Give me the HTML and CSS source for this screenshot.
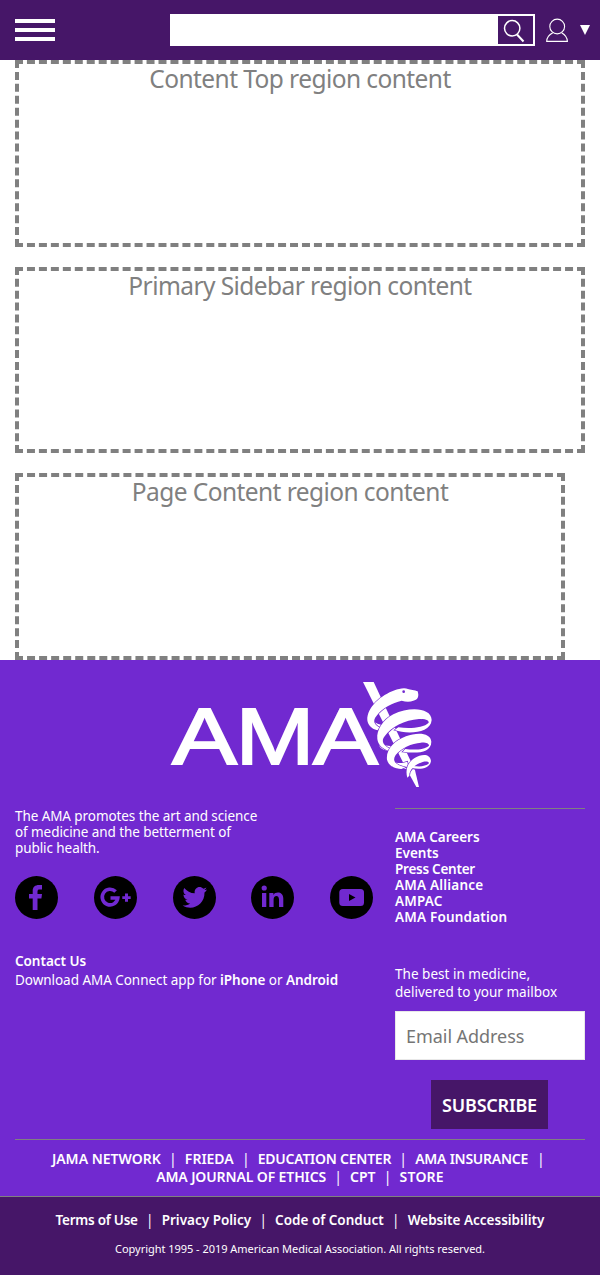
FILE: index.html
```html
<!DOCTYPE html>
<html lang="en">
<head>
<meta charset="utf-8">
<title>American Medical Association</title>
<link rel="stylesheet" href="styles.css">
</head>
<body>
<header class="header">
  <button class="menu" aria-label="Menu"><span></span><span></span><span></span></button>
  <form class="search">
    <input class="search-input" type="text" aria-label="Search">
    <button class="search-button" type="button" aria-label="Search">
      <svg width="35" height="28" viewBox="0 0 35 28" fill="none" stroke="#fff"><circle cx="14.2" cy="12.3" r="7.7" stroke-width="1.5"/><path d="M19 18.5 25.5 25.5" stroke-width="2"/></svg>
    </button>
  </form>
  <svg class="user" width="22" height="24" viewBox="0 0 22 24" fill="none" stroke="#fff" stroke-width="1.1"><circle cx="11.2" cy="8.5" r="7.4"/><path d="M6.8 14.8C3 16.8.8 19.5.7 23.4H21.4C21.2 19.5 19 16.8 15.6 14.8"/></svg>
  <svg class="caret" width="10" height="10" viewBox="0 0 10 10"><path d="M0 0H10L5 10Z" fill="#fff"/></svg>
</header>
<main class="content">
  <section class="region">Content Top region content</section>
  <section class="region">Primary Sidebar region content</section>
  <section class="region region-page">Page Content region content</section>
</main>
<footer class="footer">
  <div class="logo">
    <svg width="280" height="130" viewBox="0 0 280 130" role="img" aria-label="AMA">
      <g class="logo-text">
        <text x="12" y="94.2" textLength="65" lengthAdjust="spacingAndGlyphs">A</text>
        <text x="75.5" y="94.2" textLength="79" lengthAdjust="spacingAndGlyphs">M</text>
        <text x="153" y="94.2" textLength="65" lengthAdjust="spacingAndGlyphs">A</text>
      </g>
      <g transform="translate(155 0) scale(.33333)" class="snake">
        <path d="M144 36H176L300 301 312 351H304L271 291Z"/>
        <g transform="translate(-45 0)">
        <path d="M222 157C228 159 236 163 249 167L237 182C220 178 210 173 207 165ZM252 224C260 227 268 228 278 228L270 244C250 241 240 236 238 226ZM283 276C292 281 308 280 322 275L326 296C297 299 275 294 267 282Z"/>
        <path d="M353 64C345 60 330 60 324 57 312 52 295 57 284 61 244 75 200 112 202 151 204 165 213 176 232 181L240 173C222 164 217 152 230 137 246 115 277 98 305 92 326 99 343 93 351 87 357 79 355 72 353 64Z"/>
        <path d="M395 150C394 113 329 109 280 133 248 150 229 181 232 207 234 224 247 237 268 243L272 237C250 228 242 213 254 199 273 171 314 150 357 147 374 147 387 149 386 158 371 173 332 177 295 172L284 180C320 194 392 191 395 150Z"/>
        <path d="M394 215C392 188 352 186 318 199 283 212 257 239 261 269 265 286 281 295 304 297L317 292C284 285 276 271 287 255 304 234 335 220 363 218 378 217 387 221 387 227 373 239 344 241 316 237L308 245C342 250 394 252 394 215Z"/>
        <path d="M393 273C390 250 365 252 344 264 323 277 315 300 322 323L328 317C327 301 344 283 368 276 379 273 387 275 387 280 378 289 359 291 343 288L335 294C360 300 390 296 393 273Z"/>
        <circle class="eye" cx="311" cy="65" r="4"/>
        </g>
      </g>
    </svg>
  </div>
  <div class="columns">
    <div class="left">
      <p class="mission">The AMA promotes the art and science<br>of medicine and the betterment of<br>public health.</p>
      <div class="social">
        <svg viewBox="0 0 43 43"><circle cx="21.5" cy="21.5" r="21.5"/><path class="mark" d="M17.7 34V22.5H14V18H17.7V15C17.7 11 20 9 24 9H27V13.4H24.7C23 13.4 22.5 14 22.5 15.5V18H27L26.4 22.5H22.5V34Z"/></svg>
        <svg viewBox="0 0 43 43"><circle cx="21.5" cy="21.5" r="21.5"/><path d="M21.6 15.6A7.8 7.8 0 1 0 23.8 22H16.5" fill="none" stroke="#7129d0" stroke-width="3.6"/><path class="mark" d="M31 17.5H34V20.2H36.7V23H34V25.8H31V23H28.3V20.2H31Z"/></svg>
        <svg viewBox="0 0 43 43"><circle cx="21.5" cy="21.5" r="21.5"/><path class="mark" d="M34 13.4C33.2 13.8 32.4 14 31.4 14.1 32.4 13.5 33 12.7 33.4 11.6 32.5 12.2 31.4 12.6 30.3 12.8 26.9 9.2 21 11.7 21.7 17.3 17.5 17.1 13.7 15 11.2 11.9 9.8 14.4 10.3 17.4 12.8 19.1 11.9 19 11.1 18.8 10.4 18.4 10.4 21 12.1 23.1 14.6 23.7 13.8 23.9 13 23.9 12.2 23.8 13 26 14.8 27.4 17.1 27.5 14.9 29.1 12.3 29.8 9.6 29.5 19.6 35.5 31.8 28.5 31.5 16.5 32.5 15.7 33.3 14.7 34 13.4Z"/></svg>
        <svg viewBox="0 0 43 43"><circle cx="21.5" cy="21.5" r="21.5"/><path class="mark" d="M11 17H15.3V31H11ZM18.3 17H22.4V19C24.5 15.3 32.3 15.5 32.3 22.4V31H28V23.5C28 18.8 22.6 19.2 22.6 23.5V31H18.3Z"/><circle class="mark" cx="13.2" cy="12" r="2.6"/></svg>
        <svg viewBox="0 0 43 43"><circle cx="21.5" cy="21.5" r="21.5"/><rect class="mark" x="9.3" y="13" width="24.7" height="17" rx="3.5"/><path d="M19 18 25.5 21.5 19 25Z"/></svg>
      </div>
      <p class="contact"><b>Contact Us</b><br>Download AMA Connect app for <b>iPhone</b> or <b>Android</b></p>
    </div>
    <div class="right">
      <ul class="links"><li>AMA Careers</li><li>Events</li><li class="tight">Press Center</li><li class="loose">AMA Alliance</li><li class="loose">AMPAC</li><li class="loose">AMA Foundation</li></ul>
      <p class="best">The best in medicine,<br>delivered to your mailbox</p>
      <input class="email" type="email" placeholder="Email Address">
      <button class="subscribe">SUBSCRIBE</button>
    </div>
  </div>
  <nav class="sites">
    <div class="row"><a>JAMA NETWORK</a><i>|</i><a>FRIEDA</a><i>|</i><a class="tight">EDUCATION CENTER</a><i>|</i><a class="tight">AMA INSURANCE</a><i class="last">|</i></div>
    <div class="row"><a class="snug">AMA JOURNAL OF ETHICS</a><i>|</i><a>CPT</a><i>|</i><a class="loose">STORE</a></div>
  </nav>
</footer>
<div class="legal">
  <div class="row"><a class="tight">Terms of Use</a><i>|</i><a>Privacy Policy</a><i>|</i><a>Code of Conduct</a><i>|</i><a>Website Accessibility</a></div>
  <p class="copyright">Copyright 1995 - 2019 American Medical Association. All rights reserved.</p>
</div>
</body>
</html>
```
FILE: styles.css
```css
* { box-sizing: border-box; }
body { margin: 0; background: #fff; font: 13.5px/16px "Noto Sans", "Open Sans", sans-serif; color: #fff; }
p, ul { margin: 0; padding: 0; list-style: none; }
button, input { font-family: inherit; border: 0; border-radius: 0; padding: 0; margin: 0; }
b { font-weight: 600; }
svg { display: block; flex: none; }

.header { height: 60px; background: #461668; display: flex; align-items: center; padding: 0 10px 0 15px; }
.menu { width: 40px; height: 22px; background: none; display: flex; flex-direction: column; justify-content: space-between; }
.menu span { width: 40px; height: 4px; background: #fff; }
.search { width: 365px; height: 32px; margin-left: 115px; border: 2px solid #fff; background: #fff; display: flex; }
.search-input { flex: 1; min-width: 0; }
.search-button { width: 35px; height: 28px; background: #461668; }
.user { margin-left: 11px; }
.caret { margin-left: 12px; }

.content { padding: 0 15px; height: 600px; display: grid; grid-template-rows: repeat(3, 1fr); gap: 20px; }
.region { border: 4px dashed #808080; color: #808080; text-align: center; font-size: 24.5px; line-height: 30px; letter-spacing: -.57px; white-space: nowrap; }
.region-page { width: 550px; }

.footer { background: #7129d0; height: 536px; padding: 0 15px; }
.logo { height: 148px; padding: 10px 145px 0; }
.logo-text { font: 80px "Liberation Sans", sans-serif; fill: #fff; stroke: #fff; stroke-width: 1.8px; }
.snake { fill: #fff; stroke: #7129d0; stroke-width: 4px; paint-order: stroke; }
.eye { fill: #7129d0; stroke: none; }
.columns { display: flex; justify-content: space-between; height: 331px; white-space: nowrap; }
.left { width: 358px; }
.mission { letter-spacing: -.08px; }
.social { display: flex; justify-content: space-between; margin-top: 20px; }
.social svg { width: 43px; height: 43px; }
.mark { fill: #7129d0; }
.contact { margin-top: 33px; line-height: 19px; letter-spacing: -.04px; }
.right { width: 190px; border-top: 1px solid #808080; padding-top: 20px; display: flex; flex-direction: column; }
.links { font-weight: 600; }
.best { margin-top: 40px; line-height: 18px; letter-spacing: .02px; }
.email { width: 190px; height: 49px; margin-top: 10px; padding-left: 10px; font-size: 18px; letter-spacing: -.05px; background: #fff; border: 1px solid #e8e8e8; }
.email::placeholder { color: #757575; opacity: 1; }
.subscribe { align-self: center; width: 117px; height: 49px; margin: 20px 1px 0 0; background: #461668; color: #fff; font-size: 18px; font-weight: 600; letter-spacing: -.2px; }
.sites { border-top: 1px solid #808080; padding-top: 10px; font-size: 14px; }
.row { display: flex; justify-content: center; height: 18px; line-height: 18px; font-weight: 600; white-space: nowrap; }
.row i { width: 24px; text-align: center; font-style: normal; font-weight: 400; }
.row .last { width: 20px; padding-left: 9px; text-align: left; }
.tight { letter-spacing: -.25px; }
.snug { letter-spacing: -.12px; }
.loose { letter-spacing: .2px; }
.legal { height: 79px; background: #461668; border-top: 1px solid #808080; padding-top: 14px; }
.copyright { margin-top: 12px; text-align: center; font-size: 11px; line-height: 16px; letter-spacing: -.03px; }
```
